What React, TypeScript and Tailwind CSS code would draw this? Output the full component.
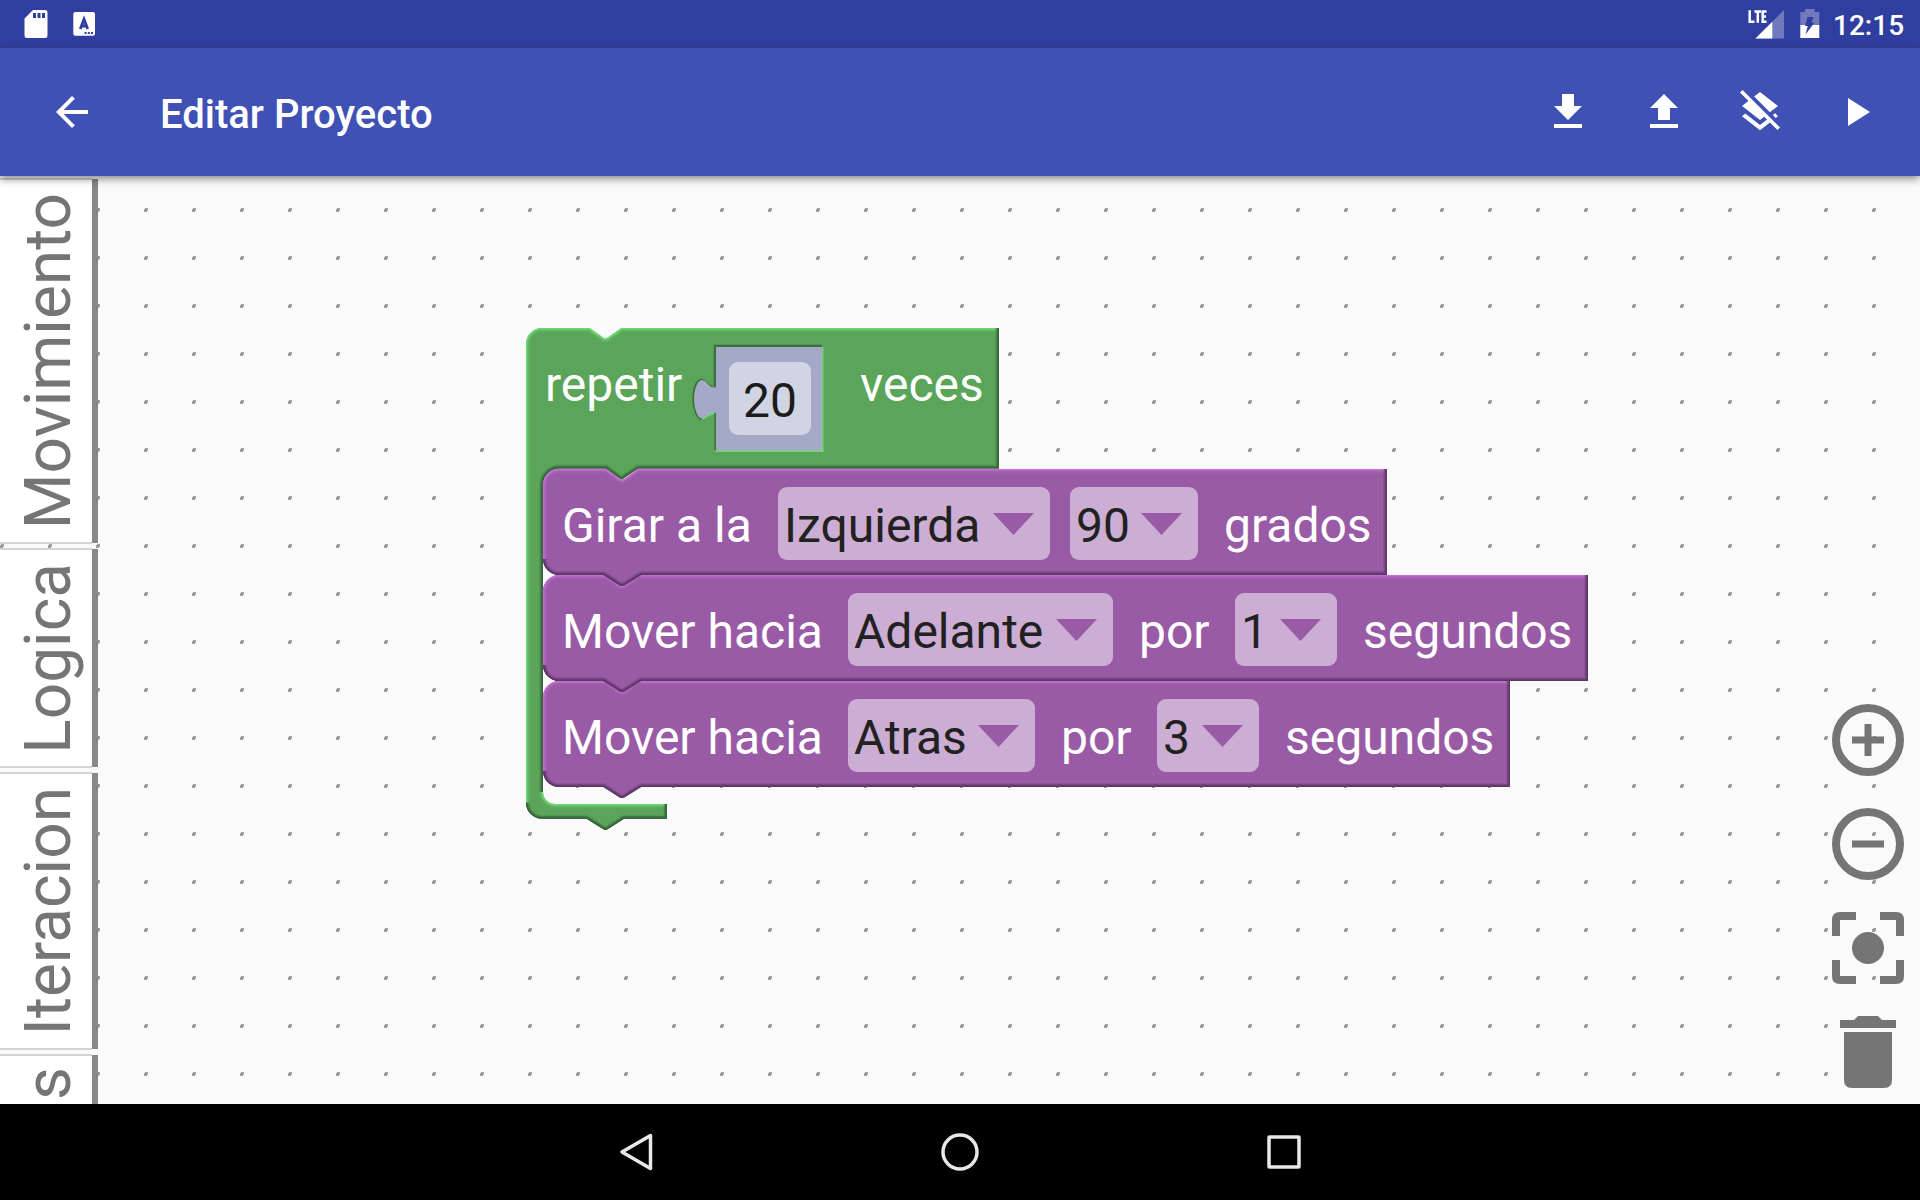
import React, { useId } from "react";

const GREEN = { base: "#5ba55b", light: "#6fd873", dark: "#37643a" };
const PURPLE = { base: "#995ba5", light: "#c46dd5", dark: "#5c3764" };

type Tone = { base: string; light: string; dark: string };

/* Filled block outline with soft light (top/left) and dark (bottom/right) edges. */
function Bevel({
  width,
  height,
  shape,
  light,
  dark,
  tone,
  children,
}: {
  width: number;
  height: number;
  shape: string;
  light: string;
  dark: string;
  tone: Tone;
  children?: React.ReactNode;
}) {
  const id = useId();
  return (
    <svg className="absolute left-0 top-0 overflow-visible" width={width} height={height}>
      <clipPath id={id}>
        <path d={shape} />
      </clipPath>
      <path d={shape} fill={tone.base} />
      <g clipPath={`url(#${id})`} fill="none">
        <path d={light} stroke={tone.light} strokeWidth="8" opacity="0.18" />
        <path d={light} stroke={tone.light} strokeWidth="5" opacity="0.3" />
        <path d={light} stroke={tone.light} strokeWidth="3" />
        <path d={dark} stroke={tone.dark} strokeWidth="8" opacity="0.2" />
        <path d={dark} stroke={tone.dark} strokeWidth="5.5" opacity="0.55" />
        <path d={dark} stroke={tone.dark} strokeWidth="3" />
      </g>
      {children}
    </svg>
  );
}

function Label({ className, children }: { className: string; children: React.ReactNode }) {
  return (
    <span className={`block shrink-0 whitespace-nowrap text-[48px] leading-[56px] text-white ${className}`}>
      {children}
    </span>
  );
}

function Dropdown({ className, children }: { className: string; children: React.ReactNode }) {
  return (
    <span
      className={`flex h-[73px] shrink-0 items-start justify-between rounded-[9px] bg-[#ccadd3] pl-[6px] pr-[16px] pt-[11px] text-[48px] leading-[56px] text-[#212121] ${className}`}
    >
      <span>{children}</span>
      <svg className="mt-[15px]" width="41" height="22">
        <path d="M0 0H41L20.5 22Z" fill={PURPLE.base} />
      </svg>
    </span>
  );
}

function Statement({ width, className, children }: { width: number; className: string; children: React.ReactNode }) {
  const top = `H63L76 9.5Q79 11.5 82 9.5L95 0H${width}`;
  const bottom = "H98L82 116Q79 118 76 116L60.500 106H16A16 16 0 0 1 0 90";
  return (
    <div className={`relative ${className}`}>
      <Bevel
        width={width}
        height={118}
        tone={PURPLE}
        shape={`M0 16A16 16 0 0 1 16 0${top}V106${bottom}Z`}
        light={`M0 90V16A16 16 0 0 1 16 0${top}`}
        dark={`M${width} 0V106${bottom}`}
      />
      <div className="relative flex items-start pl-[19px] pt-[18px]">{children}</div>
    </div>
  );
}

function RepeatBlock() {
  const top = "H63.500L77 9.500Q79.500 11.500 82 9.500L95.500 0H473";
  const mouth = "H112L98 150Q96 152 93 150L80 140.500H33A16 16 0 0 0 17 156.500V464";
  const foot = "H98L82 501Q79.500 503 77 501L60.500 490.700H16A16 16 0 0 1 0 474.700";
  return (
    <div className="absolute left-[526px] top-[152px] h-[503px] w-[1062px]">
      <Bevel
        width={473}
        height={503}
        tone={GREEN}
        shape={`M0 16A16 16 0 0 1 16 0${top}V140.5${mouth}A12 12 0 0 0 29 476H141V490.7${foot}Z`}
        light={`M0 474.700V16A16 16 0 0 1 16 0${top}M17 464A12 12 0 0 0 29 476H141`}
        dark={`M473 0V140.500${mouth}M141 476V490.700${foot}`}
      >
        <g transform="translate(190 19)" fill="none">
          <path d="M106 0V103.500H0V65.500Q-6 66-14 71.500" stroke={GREEN.light} strokeWidth="3" />
          <path
            d="M0 103.500V65.500M106 -0.500H-0.500V40.500M-4 40.500Q-8 39-14 33.500C-19 33-22 43-22 52C-22 62-18 71-14 71"
            stroke={GREEN.dark}
            strokeWidth="3.500"
            opacity="0.85"
          />
          <path
            d="M0 0H106V103.500H0V65.500H-3C-7 66-10 72-14.500 71.500C-19 71-22 60-22 52C-22 44-19 33.500-14.500 33C-10 33-7 40-3 40.500H0Z"
            fill="#a5a9c8"
          />
        </g>
      </Bevel>
      <div className="relative flex h-[141px] w-[473px] items-start pl-[19px] pt-[28px]">
        <Label className="mt-px w-[184px]">repetir</Label>
        <span className="mt-[6px] flex h-[73px] w-[82px] shrink-0 justify-center rounded-[9px] bg-[#d1d4e3] pt-[11px] text-[48px] leading-[56px] text-[#1c1c1c]">
          20
        </span>
        <Label className="ml-[49px] mt-px">veces</Label>
      </div>
      <div className="flex w-[1045px] flex-col pl-[17px]">
        <Statement width={844} className="z-30 h-[106px]">
          <Label className="mt-[11px] w-[216px]">Girar a la</Label>
          <Dropdown className="w-[272px]">Izquierda</Dropdown>
          <Dropdown className="ml-[20px] w-[128px]">90</Dropdown>
          <Label className="ml-[26px] mt-[11px]">grados</Label>
        </Statement>
        <Statement width={1045} className="z-20 h-[106px]">
          <Label className="mt-[11px] w-[286px]">Mover hacia</Label>
          <Dropdown className="w-[265px]">Adelante</Dropdown>
          <Label className="ml-[26px] mt-[11px] w-[96px]">por</Label>
          <Dropdown className="w-[102px]">1</Dropdown>
          <Label className="ml-[26px] mt-[11px]">segundos</Label>
        </Statement>
        <Statement width={967} className="z-10 h-[106px]">
          <Label className="mt-[11px] w-[286px]">Mover hacia</Label>
          <Dropdown className="w-[187px]">Atras</Dropdown>
          <Label className="ml-[26px] mt-[11px] w-[96px]">por</Label>
          <Dropdown className="w-[102px]">3</Dropdown>
          <Label className="ml-[26px] mt-[11px]">segundos</Label>
        </Statement>
      </div>
    </div>
  );
}

function Tab({ className, children }: { className: string; children: React.ReactNode }) {
  return (
    <div className={`flex w-[98px] shrink-0 ${className}`}>
      <div className="flex w-[92px] items-start justify-center border-y-2 border-[#d4d4d4] bg-white pl-[6px]">
        <span className="rotate-180 whitespace-nowrap text-[64px] leading-[76px] text-[#757575] [writing-mode:vertical-rl]">
          {children}
        </span>
      </div>
      <div className="my-px w-[6px] bg-[#888888]" />
    </div>
  );
}

function MaterialIcon({ d, className }: { d: string; className: string }) {
  return (
    <svg className={className} viewBox="0 0 24 24" fill="currentColor">
      <path d={d} />
    </svg>
  );
}

const ACTIONS = [
  "M19 9h-4V3H9v6H5l7 7 7-7zM5 18v2h14v-2H5z",
  "M9 16h6v-6h4l-7-7-7 7h4zm-4 2h14v2H5z",
  "M19.81 14.99l1.19-.92-1.43-1.43-1.19.92 1.43 1.43zm-.45-4.72L21 9l-9-7-2.91 2.27 7.87 7.88 2.4-1.88zM3.27 1L2 2.27l4.22 4.22L3 9l1.63 1.27L12 16l2.1-1.63 1.43 1.43L12 18.54l-7.37-5.73L3 14.07l9 7 4.95-3.85L20.73 21 22 19.73 3.27 1z",
  "M8 5v14l11-7z",
];

function StatusBar() {
  return (
    <div className="flex h-12 items-start justify-between bg-[#303f9f] text-white">
      <div className="flex">
        <svg width="110" height="48">
          <path
            fill="#fff"
            fillRule="evenodd"
            d="M33 10H45Q47.500 10 47.500 12.500V35.500Q47.500 38 45 38H27Q24.500 38 24.500 35.500V18.500ZM33 13V18H36V13ZM37.500 13V18H40.500V13ZM42 13V18H45V13Z"
          />
          <rect x="73.300" y="12" width="21.700" height="23.700" rx="2" fill="#fff" />
          <path d="M80.300 29L84 19.200L87.700 29M81.500 26H86.500" fill="none" stroke="#303f9f" strokeWidth="2.800" />
          <path d="M84.500 32H86.500V34H84.500ZM87.800 32H89.800V34H87.800ZM91 32H93V34H91Z" fill="#303f9f" />
        </svg>
      </div>
      <div className="flex">
        <svg width="92" height="48" className="shrink-0">
          <path d="M50 10V38.600H21.500Z" fill="#7079bc" />
          <path d="M38.300 21.800V38.600H21.500Z" fill="#fff" />
          <path
            d="M15.700 10.300V21.800H20.500M20.500 11.400H27M23.800 11.400V22.800M32.500 11.400H28.700V21.800H32.500M28.700 16.500H32"
            fill="none"
            stroke="#fff"
            strokeWidth="2.500"
          />
          <path d="M66.300 12H71V9H80.500V12H85.300V25H66.300Z" fill="#7079bc" />
          <path d="M66.300 25H85.300V38H66.300Z" fill="#fff" />
          <path d="M73.500 17H79.500L77.500 22.500H80.500L71.500 34.500L73.800 26H71Z" fill="#303f9f" />
        </svg>
        <span className="mt-[9px] w-[94px] pl-[7px] text-[28px] font-medium leading-[34px]">12:15</span>
      </div>
    </div>
  );
}

export default function App() {
  return (
    <div className="flex h-[1200px] w-[1920px] flex-col overflow-hidden bg-[#fafafa] font-['Roboto',sans-serif]">
      <StatusBar />
      <header className="relative z-50 flex h-32 items-center bg-[#3f51b5] pl-12 pr-10 text-white shadow-[0_3px_8px_rgba(0,0,0,0.45)]">
        <MaterialIcon
          className="size-12"
          d="M20 11H7.830l5.590-5.590L12 4l-8 8 8 8 1.410-1.410L7.830 13H20v-2z"
        />
        <h1 className="ml-16 mt-[6px] text-[40px] font-medium leading-[48px]">Editar Proyecto</h1>
        <div className="ml-auto flex gap-12">
          {ACTIONS.map((d) => (
            <MaterialIcon key={d} className="size-12" d={d} />
          ))}
        </div>
      </header>

      <main className="relative flex h-[928px] justify-between overflow-hidden">
        <svg className="absolute inset-0" width="1920" height="928">
          <pattern id="grid" width="48" height="48" y="32" patternUnits="userSpaceOnUse">
            <path d="M1 0H4V3H3V4H0V1H1Z" fill="#9e9e9e" />
          </pattern>
          <rect width="1920" height="928" fill="url(#grid)" />
        </svg>
        <nav className="relative flex flex-col gap-1 pt-[2px]">
          <Tab className="h-[366px] *:pt-[13px]">Movimiento</Tab>
          <Tab className="h-[220px] *:pt-[13px]">Logica</Tab>
          <Tab className="h-[278px] *:pt-[13px]">Iteracion</Tab>
          <Tab className="h-[64px] *:pt-[11px]">s</Tab>
        </nav>
        <RepeatBlock />
        <div className="relative flex w-[88px] flex-col gap-8 pt-[528px] text-[#757575]">
          <svg width="72" height="72">
            <circle cx="36" cy="36" r="32" fill="none" stroke="currentColor" strokeWidth="8" />
            <path d="M32.500 20H39.500V32.500H52V39.500H39.500V52H32.500V39.500H20V32.500H32.500Z" fill="currentColor" />
          </svg>
          <svg width="72" height="72">
            <circle cx="36" cy="36" r="32" fill="none" stroke="currentColor" strokeWidth="8" />
            <path d="M20 32.500H52V39.500H20Z" fill="currentColor" />
          </svg>
          <svg width="72" height="72">
            <circle cx="36" cy="36" r="16" fill="currentColor" />
            <path
              d="M4 24V8Q4 4 8 4H24M48 4H64Q68 4 68 8V24M68 48V64Q68 68 64 68H48M24 68H8Q4 68 4 64V48"
              fill="none"
              stroke="currentColor"
              strokeWidth="8"
            />
          </svg>
          <svg width="72" height="72">
            <path d="M12 16H60V64Q60 72 52 72H20Q12 72 12 64ZM8 4H22L26 0H46L50 4H64V12H8Z" fill="currentColor" />
          </svg>
        </div>
      </main>

      <footer className="flex h-24 items-center justify-center gap-[286px] bg-black">
        <svg width="38" height="38" fill="none" stroke="#e8e8e8" strokeWidth="3.500">
          <path d="M33.500 2.500V35.500L5 19Z" strokeLinejoin="round" />
        </svg>
        <svg width="38" height="38" fill="none" stroke="#e8e8e8" strokeWidth="3.500">
          <circle cx="19" cy="19" r="17" />
        </svg>
        <svg width="38" height="38" fill="none" stroke="#e8e8e8" strokeWidth="3.500">
          <rect x="4" y="4" width="30" height="30" rx="0.500" />
        </svg>
      </footer>
    </div>
  );
}
